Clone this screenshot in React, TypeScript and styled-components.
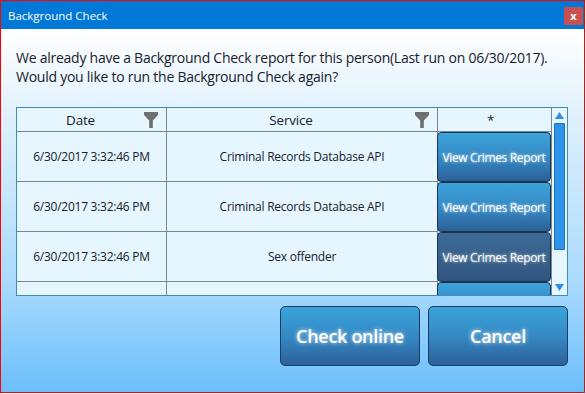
import React from "react";
import styled, { createGlobalStyle, css } from "styled-components";

const GlobalStyle = createGlobalStyle`
  html, body { margin: 0; padding: 0; background: #ffffff; }
  * { box-sizing: border-box; }
`;

const FONT = `"Open Sans", "Noto Sans", sans-serif`;

const Window = styled.div`
  width: 585px;
  height: 393px;
  border: 1px solid #ff0000;
  display: flex;
  flex-direction: column;
  font-family: ${FONT};
  overflow: hidden;
`;

const TitleBar = styled.div`
  height: 28px;
  flex: none;
  background: #0078d7;
  display: flex;
  align-items: center;
  justify-content: space-between;
  padding: 0 1px 0 7px;
`;

const Title = styled.span`
  color: #ffffff;
  font-size: 11.5px;
`;

const CloseButton = styled.button`
  width: 19px;
  height: 18px;
  margin-top: 1px;
  border: none;
  padding: 0;
  background: #c75050;
  color: #ffffff;
  font-family: ${FONT};
  font-size: 11px;
  font-weight: 700;
  line-height: 16px;
  display: flex;
  align-items: center;
  justify-content: center;
`;

const Body = styled.div`
  flex: 1;
  background: linear-gradient(180deg, #ffffff 0%, #e2f2fd 22%, #a9dafd 70%, #6cbffc 100%);
  padding: 19px 16px 0 15px;
  display: flex;
  flex-direction: column;
`;

const Message = styled.p`
  margin: 0;
  font-size: 14px;
  line-height: 19px;
  letter-spacing: -0.25px;
  white-space: nowrap;
  color: #17202e;
`;

const TableFrame = styled.div`
  margin-top: 21px;
  height: 189px;
  flex: none;
  border: 1px solid #3e8db5;
  background: #e6f6fe;
  display: flex;
  overflow: hidden;
`;

const Grid = styled.div`
  flex: 1;
  display: grid;
  grid-template-columns: 150px 271px 113px;
  grid-auto-rows: 50px;
  grid-template-rows: 24px;
  align-content: start;
`;

const HeaderCell = styled.div<{ $last?: boolean }>`
  display: flex;
  align-items: center;
  border-right: ${(p) => (p.$last ? "none" : "1px solid #7b8794")};
  border-bottom: 1px solid #7b8794;
  color: #17202e;
  font-size: 13.5px;
  letter-spacing: -0.2px;
  padding-right: 8px;
`;

const HeaderLabel = styled.span`
  flex: 1;
  text-align: center;
`;

const Cell = styled.div`
  display: flex;
  align-items: center;
  justify-content: center;
  border-right: 1px solid #7b8794;
  border-bottom: 1px solid #7b8794;
  color: #17202e;
  font-size: 12px;
  letter-spacing: -0.25px;
`;

const ActionCell = styled.div`
  display: flex;
  padding: 0;
`;

const rowBtnNormal = css`
  background: linear-gradient(180deg, #3ca3da 0%, #3587c2 55%, #2b5f98 100%);
`;
const rowBtnHover = css`
  background: linear-gradient(180deg, #3c6a96 0%, #375f89 60%, #2f5480 100%);
`;

const RowButton = styled.button<{ $hover?: boolean }>`
  flex: 1;
  margin: 0 0 0 -1px;
  border: 1px solid #1b344f;
  border-radius: 4px;
  ${(p) => (p.$hover ? rowBtnHover : rowBtnNormal)}
  color: #ffffff;
  font-family: ${FONT};
  font-size: 12px;
  letter-spacing: -0.35px;
  white-space: nowrap;
  padding: 0;
  text-shadow: 0 0 3px rgba(255, 255, 255, 0.85);
`;

const Scrollbar = styled.div`
  width: 16px;
  flex: none;
  border-left: 1px solid #7b8794;
  display: flex;
  flex-direction: column;
  align-items: center;
  padding: 4px 0 4px;
`;

const Arrow = styled.svg`
  flex: none;
  width: 9px;
  height: 7px;
`;

const ScrollTrack = styled.div`
  flex: 1;
  width: 100%;
  display: flex;
  justify-content: center;
  padding-top: 4px;
`;

const Thumb = styled.div`
  width: 11px;
  height: 127px;
  background: #2e94ea;
  border: 1px solid #1f73bd;
  border-radius: 1px;
`;

const Footer = styled.div`
  display: flex;
  justify-content: flex-end;
  gap: 8px;
  margin-top: 10px;
`;

const BigButton = styled.button`
  width: 140px;
  height: 60px;
  border: 1px solid #1c3d63;
  border-radius: 5px;
  background: linear-gradient(180deg, #39a3db 0%, #3589c4 50%, #2c6199 100%);
  color: #ffffff;
  font-family: ${FONT};
  font-size: 18px;
  font-weight: 600;
  letter-spacing: -0.3px;
  text-shadow: 0 0 4px rgba(255, 255, 255, 0.85);
  padding: 0;
`;

const FilterIcon = () => (
  <svg width="14" height="16" viewBox="0 0 14 16">
    <path d="M0 0 H14 V3 L8.8 8.5 V16 H5.2 V8.5 L0 3 Z" fill="#6e6f70" />
  </svg>
);

const rows = [
  { date: "6/30/2017 3:32:46 PM", service: "Criminal Records Database API", hover: false },
  { date: "6/30/2017 3:32:46 PM", service: "Criminal Records Database API", hover: false },
  { date: "6/30/2017 3:32:46 PM", service: "Sex offender", hover: true },
  { date: "", service: "", hover: false },
];

export default function App() {
  return (
    <>
      <GlobalStyle />
      <Window>
        <TitleBar>
          <Title>Background Check</Title>
          <CloseButton>x</CloseButton>
        </TitleBar>
        <Body>
          <Message>
            We already have a Background Check report for this person(Last run on 06/30/2017).
            <br />
            Would you like to run the Background Check again?
          </Message>
          <TableFrame>
            <Grid>
              <HeaderCell>
                <HeaderLabel>Date</HeaderLabel>
                <FilterIcon />
              </HeaderCell>
              <HeaderCell>
                <HeaderLabel>Service</HeaderLabel>
                <FilterIcon />
              </HeaderCell>
              <HeaderCell $last>
                <HeaderLabel>*</HeaderLabel>
              </HeaderCell>
              {rows.map((r, i) => (
                <React.Fragment key={i}>
                  <Cell>{r.date}</Cell>
                  <Cell>{r.service}</Cell>
                  <ActionCell>
                    <RowButton $hover={r.hover}>{r.date ? "View Crimes Report" : ""}</RowButton>
                  </ActionCell>
                </React.Fragment>
              ))}
            </Grid>
            <Scrollbar>
              <Arrow viewBox="0 0 9 7">
                <path d="M4.5 0 L9 7 H0 Z" fill="#2e8fe2" />
              </Arrow>
              <ScrollTrack>
                <Thumb />
              </ScrollTrack>
              <Arrow viewBox="0 0 9 7">
                <path d="M0 0 H9 L4.5 7 Z" fill="#2e8fe2" />
              </Arrow>
            </Scrollbar>
          </TableFrame>
          <Footer>
            <BigButton>Check online</BigButton>
            <BigButton>Cancel</BigButton>
          </Footer>
        </Body>
      </Window>
    </>
  );
}
